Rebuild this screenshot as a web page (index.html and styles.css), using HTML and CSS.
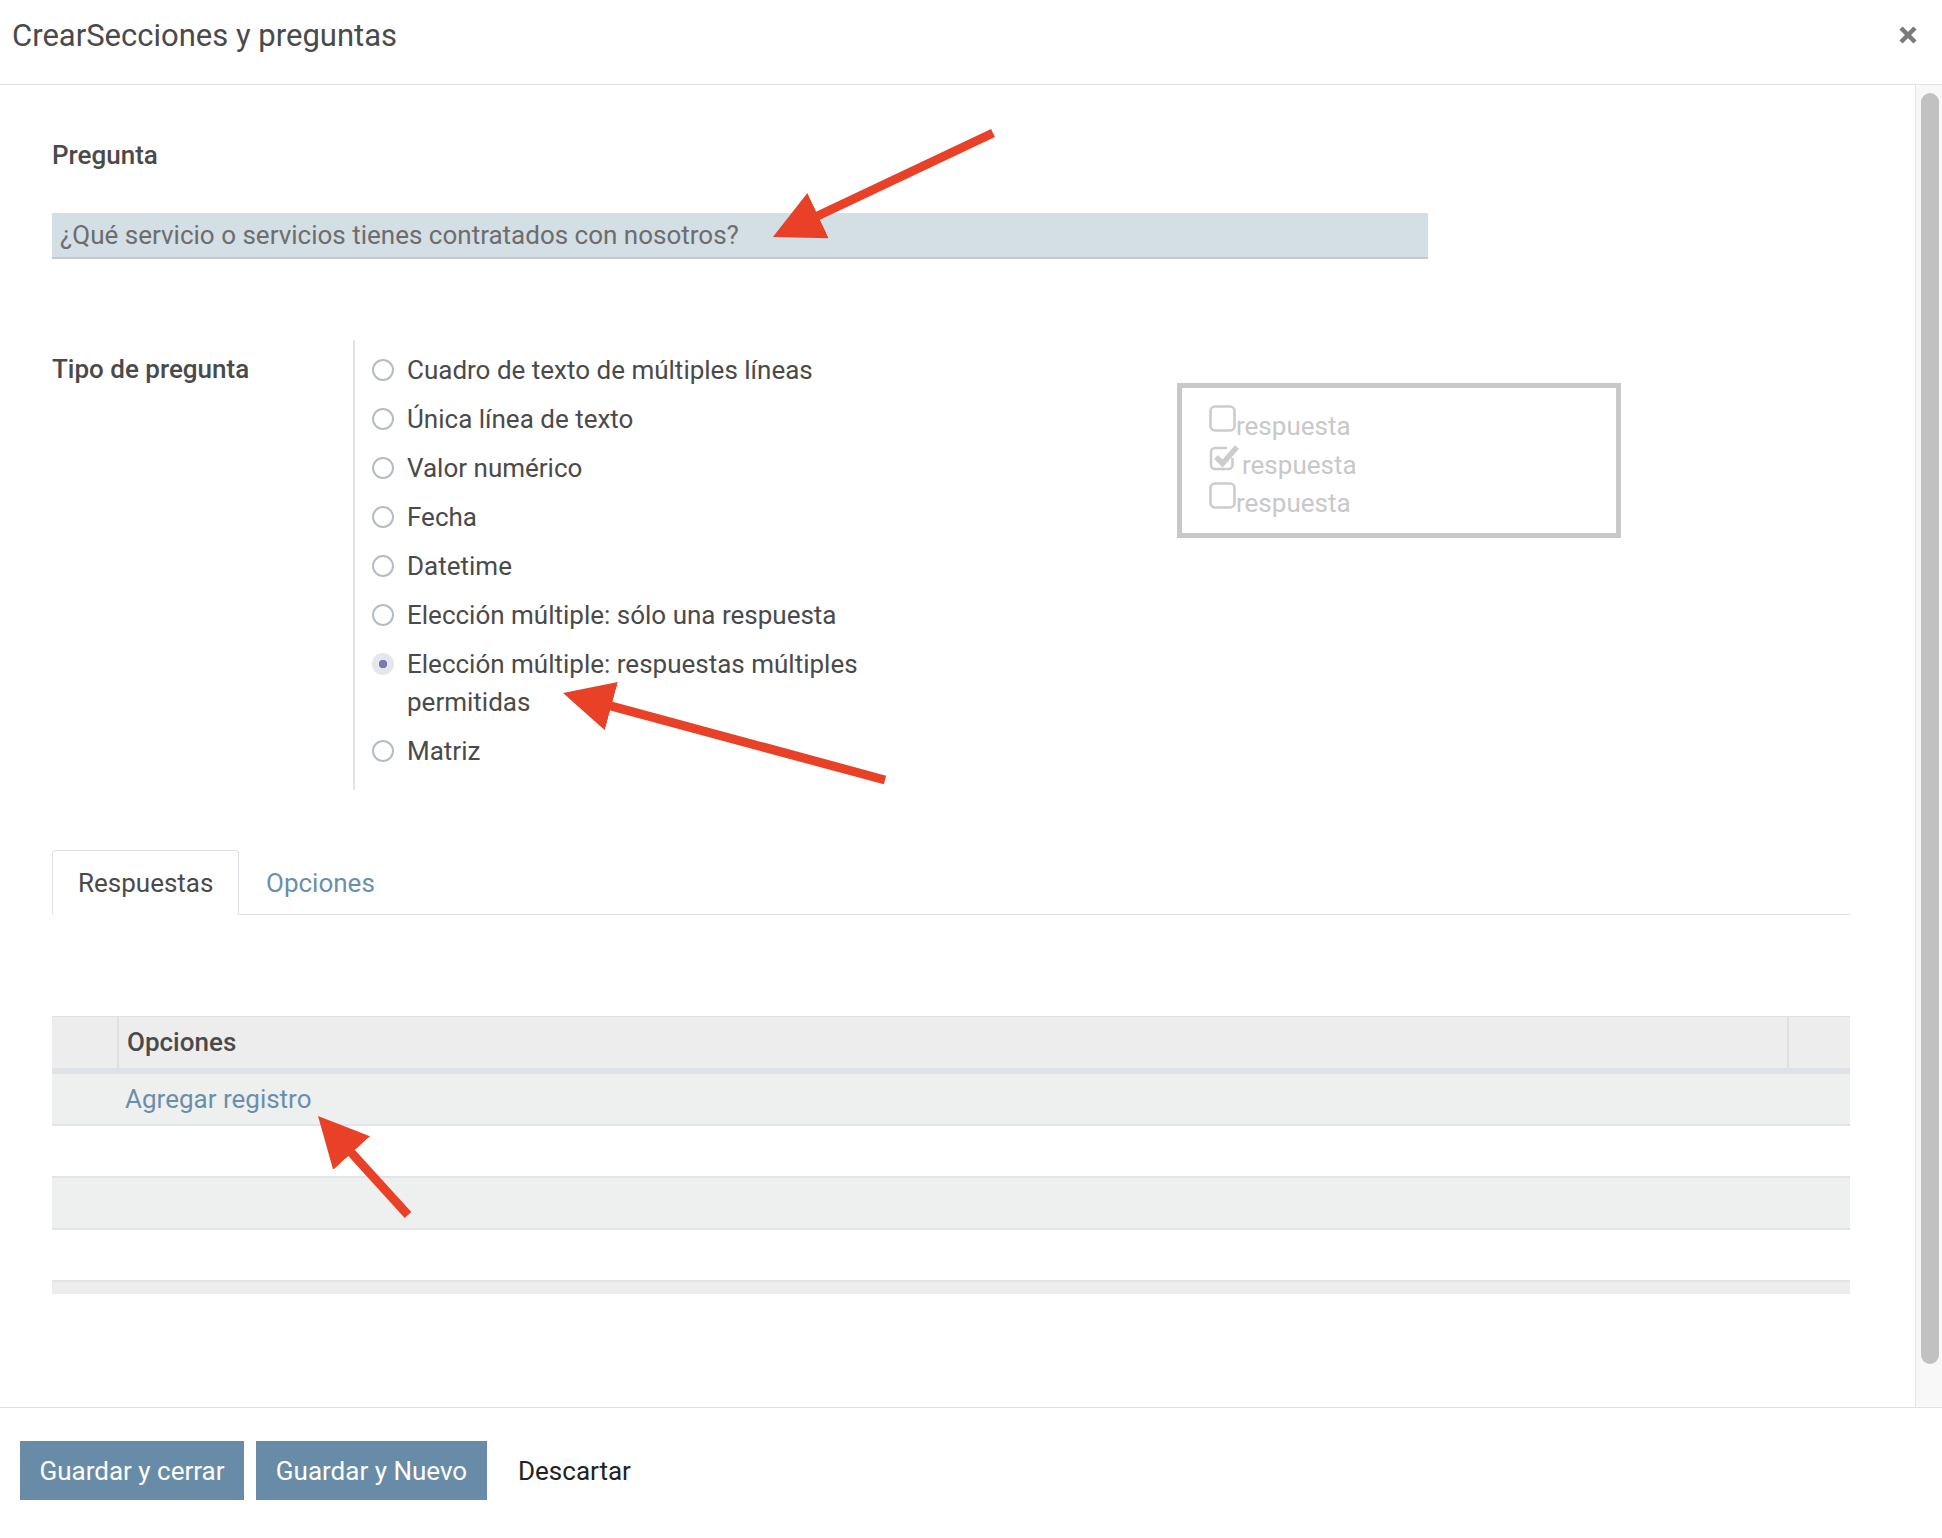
FILE: index.html
```html
<!DOCTYPE html>
<html lang="es">
<head>
<meta charset="utf-8">
<title>CrearSecciones y preguntas</title>
<link rel="stylesheet" href="styles.css">
</head>
<body>
<div class="modal">
  <header class="modal-header">
    <h4 class="modal-title">CrearSecciones y preguntas</h4>
    <button class="close" aria-label="Cerrar">
      <svg width="20" height="20" viewBox="0 0 20 20"><path d="M3 3 L17 17 M17 3 L3 17" stroke="#7a7a7a" stroke-width="4.5" stroke-linecap="butt"/></svg>
    </button>
  </header>

  <div class="modal-body">
    <div class="content">
      <div class="field-label">Pregunta</div>
      <div class="question-input">¿Qué servicio o servicios tienes contratados con nosotros?</div>

      <div class="type-section">
        <div class="field-label type-label">Tipo de pregunta</div>
        <ul class="radio-list">
          <li class="radio-row"><span class="radio"></span><span class="radio-text">Cuadro de texto de múltiples líneas</span></li>
          <li class="radio-row"><span class="radio"></span><span class="radio-text">Única línea de texto</span></li>
          <li class="radio-row"><span class="radio"></span><span class="radio-text">Valor numérico</span></li>
          <li class="radio-row"><span class="radio"></span><span class="radio-text">Fecha</span></li>
          <li class="radio-row"><span class="radio"></span><span class="radio-text">Datetime</span></li>
          <li class="radio-row"><span class="radio"></span><span class="radio-text">Elección múltiple: sólo una respuesta</span></li>
          <li class="radio-row"><span class="radio checked"></span><span class="radio-text">Elección múltiple: respuestas múltiples permitidas</span></li>
          <li class="radio-row"><span class="radio"></span><span class="radio-text">Matriz</span></li>
        </ul>
        <div class="preview">
          <div class="preview-row">
            <svg class="cb" width="27" height="30" viewBox="0 0 27 30"><rect x="1.5" y="2.5" width="24" height="24" rx="4.5" fill="none" stroke="#cccccc" stroke-width="2.6"/></svg><span>respuesta</span>
          </div>
          <div class="preview-row">
            <svg class="cb cb-checked" width="33" height="30" viewBox="0 0 33 30"><path d="M23.5 15 V22 a4 4 0 0 1 -4 4 H6 a4 4 0 0 1 -4 -4 V9 a4 4 0 0 1 4 -4 H18" fill="none" stroke="#cccccc" stroke-width="2.6"/><path d="M7 14 L13.5 20.5 L28 4" fill="none" stroke="#cccccc" stroke-width="5.5" stroke-linejoin="miter"/></svg><span>respuesta</span>
          </div>
          <div class="preview-row">
            <svg class="cb" width="27" height="30" viewBox="0 0 27 30"><rect x="1.5" y="2.5" width="24" height="24" rx="4.5" fill="none" stroke="#cccccc" stroke-width="2.6"/></svg><span>respuesta</span>
          </div>
        </div>
      </div>

      <nav class="tabs">
        <a class="tab active">Respuestas</a>
        <a class="tab">Opciones</a>
      </nav>

      <div class="table">
        <div class="thead">
          <div class="th th-handle"></div>
          <div class="th th-main">Opciones</div>
          <div class="th th-del"></div>
        </div>
        <div class="tr tr-gray"><span class="add-link">Agregar registro</span></div>
        <div class="tr"></div>
        <div class="tr tr-gray"></div>
        <div class="tr"></div>
        <div class="tfoot"></div>
      </div>
    </div>
    <div class="scrollbar"><div class="thumb"></div></div>
  </div>

  <footer class="modal-footer">
    <button class="btn btn-primary btn-close">Guardar y cerrar</button>
    <button class="btn btn-primary btn-new">Guardar y Nuevo</button>
    <button class="btn btn-link">Descartar</button>
  </footer>
</div>

<svg class="annotations" width="1942" height="1538" viewBox="0 0 1942 1538">
  <defs>
    <marker id="head" markerUnits="userSpaceOnUse" viewBox="0 0 50 50" markerWidth="50" markerHeight="50" refX="20" refY="25" orient="auto">
      <path d="M0,0 L50,25 L0,50 z" fill="#e94128"/>
    </marker>
  </defs>
  <line x1="993" y1="133" x2="800" y2="224.2" stroke="#e94128" stroke-width="9" marker-end="url(#head)"/>
  <line x1="885" y1="780" x2="592" y2="700.8" stroke="#e94128" stroke-width="9" marker-end="url(#head)"/>
  <line x1="408" y1="1215" x2="338.2" y2="1138.2" stroke="#e94128" stroke-width="9" marker-end="url(#head)"/>
</svg>
</body>
</html>
```

FILE: styles.css
```css
* { box-sizing: border-box; }

html, body {
  margin: 0;
  padding: 0;
  background: #ffffff;
}

body {
  width: 1942px;
  height: 1538px;
  position: relative;
  overflow: hidden;
  font-family: Roboto, "Liberation Sans", sans-serif;
  color: #4a4a4a;
}

.modal {
  display: flex;
  flex-direction: column;
  height: 1538px;
}

/* Header */
.modal-header {
  height: 85px;
  flex: none;
  display: flex;
  align-items: center;
  justify-content: space-between;
  border-bottom: 1px solid #dee2e6;
  padding: 0 24px 14px 12px;
}

.modal-title {
  margin: 0;
  font-size: 31px;
  font-weight: 400;
  color: #4a4a4a;
}

.close {
  border: 0;
  background: none;
  padding: 0;
  width: 20px;
  height: 20px;
  display: flex;
}

/* Body */
.modal-body {
  flex: 1;
  display: flex;
  min-height: 0;
}

.content {
  flex: 1;
  padding: 55px 65px 0 52px;
}

.field-label {
  font-size: 26px;
  font-weight: 500;
  line-height: 30px;
  color: #4a4a4a;
}

.question-input {
  margin-top: 43px;
  height: 46px;
  width: 1376px;
  background: #d3dee5;
  border-bottom: 2px solid #c6c9cc;
  padding: 0 8px;
  font-size: 26px;
  line-height: 44px;
  color: #6d6d6d;
}

.type-section {
  margin-top: 81px;
  display: grid;
  grid-template-columns: 301px 824px 444px;
  align-items: start;
}

.type-label {
  padding-top: 14px;
}

.radio-list {
  list-style: none;
  margin: 0;
  padding: 5px 0 15px 17px;
  border-left: 2px solid #e3e3e3;
}

.radio-row {
  display: flex;
  align-items: flex-start;
  padding: 5.5px 0;
}

.radio {
  flex: none;
  width: 22px;
  height: 22px;
  margin-top: 8px;
  margin-right: 13px;
  border: 2px solid #b5bcc4;
  border-radius: 50%;
  background: #fff;
}

.radio.checked {
  border-color: #e6e6ef;
  background: radial-gradient(circle, #7b78ad 0 4px, #e6e6ef 4.5px);
}

.radio-text {
  font-size: 26px;
  line-height: 38px;
  color: #4a4a4a;
  max-width: 500px;
}

.preview {
  margin-top: 43px;
  height: 155px;
  border: 5px solid #c8c8c8;
  padding: 16px 0 0 27px;
}

.preview-row {
  display: flex;
  align-items: flex-start;
  height: 38.5px;
  font-size: 26px;
  line-height: 44px;
  color: #c8c8c8;
}

.cb {
  flex: none;
  margin-top: 0;
}

/* Tabs */
.tabs {
  margin-top: 60px;
  display: flex;
  height: 65px;
  border-bottom: 1px solid #dee2e6;
}

.tab {
  display: block;
  height: 65px;
  padding: 0 26px;
  font-size: 26px;
  line-height: 64px;
  color: #6a8fab;
  border: 1px solid transparent;
  border-top-left-radius: 4px;
  border-top-right-radius: 4px;
}

.tab.active {
  color: #4a4a4a;
  background: #fff;
  border-color: #dee2e6 #dee2e6 #fff;
  padding-left: 25px;
  width: 187px;
}

/* Table */
.table {
  margin-top: 101px;
  width: 1798px;
}

.thead {
  display: flex;
  height: 58px;
  background: #ededed;
  border-top: 1px solid #dee2e6;
  border-bottom: 6px solid #dfe3e8;
}

.th {
  font-size: 26px;
  font-weight: 500;
  line-height: 51px;
  color: #4a4a4a;
}

.th-handle {
  width: 67px;
  border-right: 2px solid #e0e0e0;
}

.th-main {
  flex: 1;
  padding-left: 8px;
}

.th-del {
  width: 63px;
  border-left: 2px solid #e0e0e0;
}

.tr {
  height: 52px;
  border-bottom: 2px solid #e2e5e8;
}

.tr-gray {
  background: #eef0ef;
}

.add-link {
  display: block;
  padding-left: 73px;
  font-size: 26px;
  line-height: 50px;
  color: #6a8fab;
}

.tfoot {
  height: 12px;
  background: #ededed;
}

/* Scrollbar */
.scrollbar {
  flex: none;
  width: 27px;
  background: #f8f8f8;
  border-left: 1px solid #e4e4e4;
  padding: 8px 3px 43px 5px;
}

.thumb {
  height: 100%;
  background: #c1c1c1;
  border-radius: 9px;
}

/* Footer */
.modal-footer {
  flex: none;
  height: 131px;
  border-top: 1px solid #dee2e6;
  display: flex;
  align-items: flex-start;
  gap: 12px;
  padding: 33px 20px 0;
}

.btn {
  height: 59px;
  border: 0;
  border-radius: 0;
  font-family: Roboto, "Liberation Sans", sans-serif;
  font-size: 26px;
  padding: 0 19px;
  cursor: pointer;
}

.btn-primary {
  background: #688ca8;
  color: #ffffff;
}

.btn-close { width: 224px; }
.btn-new { width: 231px; }

.btn-link {
  background: none;
  color: #222222;
}

/* Annotation overlay */
.annotations {
  position: absolute;
  left: 0;
  top: 0;
  pointer-events: none;
}
```
